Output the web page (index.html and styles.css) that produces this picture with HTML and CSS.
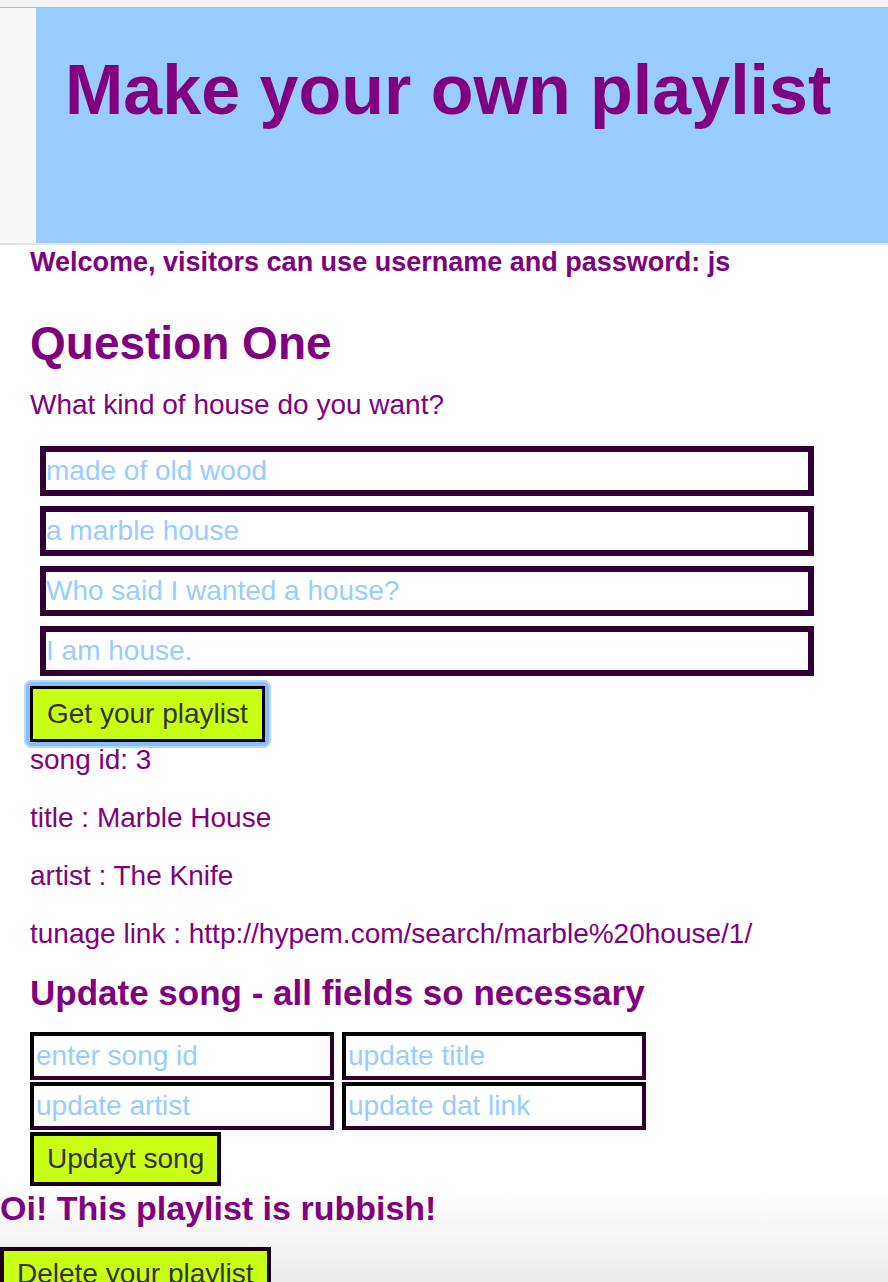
FILE: index.html
```html
<!DOCTYPE html>
<html lang="en">
<head>
<meta charset="utf-8">
<title>Make your own playlist</title>
<link rel="stylesheet" href="styles.css">
</head>
<body>
<div class="topbar"></div>
<header class="masthead">
  <div class="side"></div>
  <div class="banner"><h1 class="title">Make your own playlist</h1></div>
</header>
<main class="content">
  <p class="welcome">Welcome, visitors can use username and password: js</p>
  <h2 class="question">Question One</h2>
  <p class="prompt">What kind of house do you want?</p>
  <div class="answers">
    <input class="answer" type="text" placeholder="made of old wood">
    <input class="answer" type="text" placeholder="a marble house">
    <input class="answer" type="text" placeholder="Who said I wanted a house?">
    <input class="answer" type="text" placeholder="I am house.">
  </div>
  <button class="btn btn-get is-focused" type="button">Get your playlist</button>
  <div class="song">
    <p class="song-line">song id: 3</p>
    <p class="song-line">title : Marble House</p>
    <p class="song-line">artist : The Knife</p>
    <p class="song-line">tunage link : http://hypem.com/search/marble%20house/1/</p>
  </div>
  <h3 class="update-title">Update song - all fields so necessary</h3>
  <div class="update-grid">
    <input class="update-field" type="text" placeholder="enter song id">
    <input class="update-field" type="text" placeholder="update title">
    <input class="update-field" type="text" placeholder="update artist">
    <input class="update-field" type="text" placeholder="update dat link">
  </div>
  <button class="btn btn-update" type="button">Updayt song</button>
</main>
<section class="danger">
  <h3 class="danger-title">Oi! This playlist is rubbish!</h3>
  <button class="btn btn-delete" type="button">Delete your playlist</button>
</section>
</body>
</html>
```
FILE: styles.css
```css
html {
  min-height: 1282px;
  background: linear-gradient(to bottom, #ffffff 0, #ffffff 1190px, #ebebeb 1282px);
}
body {
  margin: 0;
  font-family: "Liberation Sans", Arial, sans-serif;
  color: #800080;
}
.topbar {
  height: 7px;
  background: #f2f2f2;
  border-bottom: 1px solid #bdbdbd;
}
.masthead {
  display: flex;
  height: 235px;
  border-bottom: 2px solid #e4e4e4;
}
.side {
  width: 36px;
  background: #f8f8f8;
}
.banner {
  flex: 1;
  background: #99ccff;
  padding: 42px 0 0 29px;
}
.title {
  margin: 0;
  font-size: 70px;
  line-height: 80px;
  font-weight: bold;
  color: #800080;
}
.content {
  padding-left: 30px;
}
.welcome {
  margin: 2px 0 0;
  font-size: 27px;
  line-height: 31px;
  font-weight: bold;
}
.question {
  margin: 39px 0 0;
  font-size: 46px;
  line-height: 53px;
  font-weight: bold;
}
.prompt {
  margin: 19px 0 0;
  font-size: 28px;
  line-height: 32px;
}
.answers {
  margin: 25px 0 0 10px;
  display: flex;
  flex-direction: column;
  gap: 10px;
}
.answer {
  box-sizing: border-box;
  width: 774px;
  height: 50px;
  border: 6px solid #330033;
  padding: 0;
  margin: 0;
  font-family: "Liberation Sans", Arial, sans-serif;
  font-size: 28px;
  color: #800080;
  background: #fff;
  outline: none;
}
.answer::placeholder,
.update-field::placeholder {
  color: #99ccff;
  opacity: 1;
}
.btn {
  display: block;
  position: relative;
  box-sizing: border-box;
  margin: 0;
  font-family: "Liberation Sans", Arial, sans-serif;
  font-size: 28px;
  line-height: 32px;
  color: #333333;
  background: #c8ff14;
  border-radius: 0;
  cursor: pointer;
}
.btn-get {
  margin-top: 10px;
  height: 56px;
  padding: 0 14px;
  border: 3px solid #000000;
}
.is-focused::before {
  content: "";
  position: absolute;
  top: -9px;
  left: -9px;
  right: -9px;
  bottom: -9px;
  border-radius: 8px;
  background: #88bef7;
  box-shadow: inset 0 0 0 2px #b6d8fb;
  z-index: -1;
}
.song {
  margin-top: 3px;
  display: flex;
  flex-direction: column;
  gap: 28px;
}
.song-line {
  margin: 0;
  font-size: 28px;
  line-height: 30px;
}
.update-title {
  margin: 24px 0 0;
  font-size: 35px;
  line-height: 40px;
  font-weight: bold;
}
.update-grid {
  margin-top: 19px;
  display: grid;
  grid-template-columns: 304px 304px;
  grid-auto-rows: 48px;
  gap: 2px 8px;
}
.update-field {
  box-sizing: border-box;
  width: 304px;
  height: 48px;
  margin: 0;
  padding: 0 0 0 2px;
  border-style: solid;
  border-width: 4px;
  border-color: #000000 #330033 #330033 #000000;
  font-family: "Liberation Sans", Arial, sans-serif;
  font-size: 28px;
  color: #800080;
  background: #fff;
  outline: none;
}
.btn-update {
  margin-top: 2px;
  height: 54px;
  padding: 0 13px;
  border-style: solid;
  border-width: 4px;
  border-color: #000000 #1a001a #1a001a #000000;
}
.danger-title {
  margin: 3px 0 0;
  font-size: 34px;
  line-height: 39px;
  font-weight: bold;
}
.btn-delete {
  margin-top: 19px;
  height: 54px;
  padding: 0 13px;
  border-style: solid;
  border-width: 4px;
  border-color: #1a001a;
}
```
